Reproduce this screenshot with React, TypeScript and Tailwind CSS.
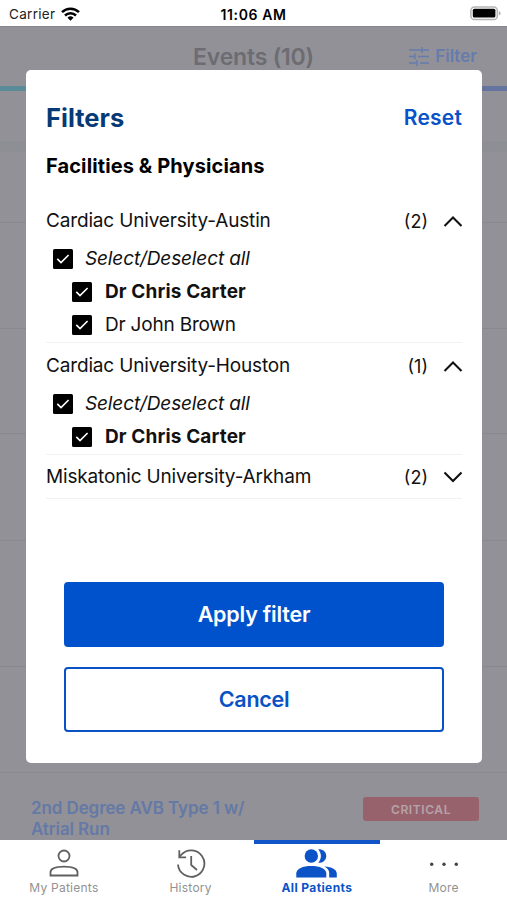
import { useState } from 'react';
import clsx from 'clsx';

interface Physician {
  name: string;
  primary?: boolean;
}

interface Facility {
  name: string;
  count: number;
  physicians: Physician[];
}

const facilities: Facility[] = [
  {
    name: 'Cardiac University-Austin',
    count: 2,
    physicians: [{ name: 'Dr Chris Carter', primary: true }, { name: 'Dr John Brown' }],
  },
  {
    name: 'Cardiac University-Houston',
    count: 1,
    physicians: [{ name: 'Dr Chris Carter', primary: true }],
  },
  { name: 'Miskatonic University-Arkham', count: 2, physicians: [] },
];

function StatusBar() {
  return (
    <div className="grid h-[26px] shrink-0 grid-cols-3 items-center bg-white pt-[2px] text-black">
      <div className="flex items-center gap-[6px] pl-[9px]">
        <span className="text-[13.5px] tracking-[0.3px] text-[#222]">Carrier</span>
        <svg width="19" height="14" viewBox="0 0 19 14" fill="none" stroke="currentColor" strokeWidth="2.5">
          <path d="M1 5.2a12.2 12.2 0 0 1 17 0" />
          <path d="M4 8.5a7.9 7.9 0 0 1 11 0" />
          <path d="M9.5 13.8 6.5 10.8a4.3 4.3 0 0 1 6 0z" fill="currentColor" stroke="none" />
        </svg>
      </div>
      <span className="text-center text-[14px] font-semibold tracking-[0.6px]">11:06 AM</span>
      <div className="flex items-center justify-end pr-[6px] pb-[2px]">
        <svg width="31" height="15" viewBox="0 0 31 15">
          <rect x="0.9" y="0.9" width="26.4" height="12.6" rx="3.6" fill="#fff" stroke="#b4b4b4" strokeWidth="1.5" />
          <rect x="2.8" y="2.8" width="22.6" height="8.8" rx="1.5" fill="#000" />
          <path d="M28.8 5v4.4c1.4-.6 1.9-1.2 1.9-2.2s-.5-1.6-1.9-2.2z" fill="#b4b4b4" />
        </svg>
      </div>
    </div>
  );
}

function Checkbox() {
  return (
    <svg className="shrink-0" width="20" height="20" viewBox="0 0 20 20">
      <rect width="20" height="20" rx="1.5" fill="#000" />
      <path d="M4.3 9.9 8 13.6l7.6-7.6" fill="none" stroke="#fff" strokeWidth="1.6" />
    </svg>
  );
}

function FacilitySection({ facility }: { facility: Facility }) {
  const [open, setOpen] = useState(facility.physicians.length > 0);

  return (
    <div className="border-b border-[#f1f1f3]">
      <button
        className={clsx('flex w-full items-center text-left text-[19px]', open ? 'h-[45px]' : 'h-[43px]')}
        onClick={() => setOpen(!open)}
      >
        <span className="flex-1 pt-[2px] tracking-[-0.16px]">{facility.name}</span>
        <span className="w-[35px] pt-[1px] text-right text-[18px]">({facility.count})</span>
        <svg className="-mr-px ml-[15px]" width="20" height="20" viewBox="0 0 20 20" fill="none" stroke="#111" strokeWidth="2.1">
          <path d={open ? 'M1.5 15 10 6.5l8.5 8.5' : 'M1.5 5.5 10 14l8.5-8.5'} />
        </svg>
      </button>
      {open && (
        <div className="pb-[1px]">
          <div className="flex h-[32px] items-center gap-[12px] pl-[7px]">
            <Checkbox />
            <span className="text-[19px] italic tracking-[-0.12px]">Select/Deselect all</span>
          </div>
          {facility.physicians.map((physician) => (
            <div key={physician.name} className="flex h-[33px] items-center gap-[13px] pl-[26px]">
              <Checkbox />
              <span className={clsx('pt-px text-[19px]', physician.primary ? 'font-bold tracking-[0.13px]' : 'tracking-[-0.2px]')}>
                {physician.name}
              </span>
            </div>
          ))}
        </div>
      )}
    </div>
  );
}

function FilterDialog() {
  return (
    <div className="absolute top-[70px] left-[26px] flex h-[693px] w-[456px] flex-col rounded-[5px] bg-white px-5 text-[#111]">
      <div className="flex h-[96px] items-center justify-between">
        <h2 className="text-[25.5px] font-bold tracking-[0.02px] text-[#063a76]">Filters</h2>
        <button className="text-[21px] font-semibold tracking-[0.2px] text-[#0852c9]">Reset</button>
      </div>
      <h3 className="-mt-[13px] text-[20px] leading-[26px] font-bold tracking-[0.11px] text-black">
        Facilities &amp; Physicians
      </h3>
      <div className="mt-[19px]">
        {facilities.map((facility) => (
          <FacilitySection key={facility.name} facility={facility} />
        ))}
      </div>
      <div className="mt-auto flex flex-col gap-5 px-[18px] pb-[31.5px]">
        <button className="h-[65px] rounded-[4px] bg-[#0052cc] text-[21.5px] font-semibold tracking-[-0.2px] text-white">
          Apply filter
        </button>
        <button className="h-[65px] rounded-[4px] border-2 border-[#0852c4] text-[21.5px] font-semibold tracking-[-0.3px] text-[#0852c4]">
          Cancel
        </button>
      </div>
    </div>
  );
}

function EventsBackdrop() {
  return (
    <div className="flex flex-1 flex-col overflow-hidden bg-[#929197]">
      <div className="grid h-[60px] shrink-0 grid-cols-[1fr_auto_1fr] items-center border-t border-[#87868c] text-[#6c6c72]">
        <span />
        <h1 className="pt-px text-[23px] font-semibold tracking-[-0.2px]">Events (10)</h1>
        <div className="flex items-center justify-end gap-[6px] pr-[30px] text-[#657cad]">
          <svg width="20" height="19" viewBox="0 0 20 19" fill="none" stroke="currentColor" strokeWidth="1.4">
            <path d="M0 3h13M13 0v6M13 3h7M0 9.5h6M6 6.5v6M9 9.5h11M0 16h8M8 13v6M11 16h9" />
          </svg>
          <span className="text-[17px] font-semibold">Filter</span>
        </div>
      </div>
      <div className="grid h-[5px] shrink-0 grid-cols-2">
        <div className="bg-[#5a8b98]" />
        <div className="bg-[#64749f]" />
      </div>
      <div className="h-[50px] shrink-0" />
      <div className="h-[11px] shrink-0 bg-[#8e8f95]" />
      <div className="h-[71px] shrink-0 border-b border-[#88888e]" />
      <div className="h-[106px] shrink-0 border-b border-[#88888e]" />
      <div className="h-[105px] shrink-0 border-b border-[#88888e]" />
      <div className="h-[107px] shrink-0 border-b border-[#88888e]" />
      <div className="h-[126px] shrink-0 border-b border-[#88888e]" />
      <div className="h-[106px] shrink-0 border-b border-[#88888e]" />
      <div className="flex items-start justify-between pt-[24px] pr-[28px] pl-[31px]">
        <p className="w-[250px] pt-px text-[17px] leading-[21px] font-semibold tracking-[-0.1px] text-[#6479a6]">
          2nd Degree AVB Type 1 w/ Atrial Run
        </p>
        <span className="flex h-[24px] w-[116px] items-center justify-center rounded-[3px] bg-[#98626c] pt-px text-[12px] font-semibold tracking-[0.6px] text-[#b5a3aa]">
          CRITICAL
        </span>
      </div>
    </div>
  );
}

function TabBar() {
  return (
    <nav className="grid h-[60px] shrink-0 grid-cols-4 bg-white text-[12px] text-[#929292]">
      <div className="flex flex-col items-center pt-[9px] pl-px">
        <svg width="30" height="29" viewBox="0 0 30 29" fill="none" stroke="#606060" strokeWidth="1.8">
          <circle cx="15" cy="7" r="5.5" />
          <path d="M1.5 26.5v-3.2C1.5 19.5 7.5 17.7 15 17.7s13.5 1.8 13.5 5.6v3.2z" />
        </svg>
        <span className="mt-[2px] leading-[16px] tracking-[0.25px]">My Patients</span>
      </div>
      <div className="flex flex-col items-center pt-[9px] pl-px">
        <svg width="30" height="29" viewBox="0 0 30 29" fill="none" stroke="#606060" strokeWidth="1.8">
          <path d="M2 15.5a13.2 13.2 0 1 0 3.2-9.6L3.2 8" />
          <path d="M3.3 1.3v7h6.8M15.2 7v9l5.8 5" />
        </svg>
        <span className="mt-[2px] leading-[16px] tracking-[0.25px]">History</span>
      </div>
      <div className="flex flex-col items-center border-t-4 border-[#1054c7] pt-[5px] font-bold text-[#0b53c7]">
        <svg width="41" height="29" viewBox="0 0 41 29" fill="currentColor">
          <circle cx="15.3" cy="7" r="6.7" />
          <path d="M22.2.5a6.7 6.7 0 1 1 0 13.1c3.6-3.4 3.6-9.7 0-13.1z" />
          <path d="M.3 28.5v-4.3c0-4.7 6.7-7.3 15-7.3s15 2.6 15 7.3v4.3z" />
          <path d="M28.4 17.6c7.4.3 12.4 3 12.4 7.2v3.7h-7.6v-4.3c0-2.8-1.9-5.1-4.8-6.6z" />
        </svg>
        <span className="mt-[2px] leading-[16px] tracking-[0.4px]">All Patients</span>
      </div>
      <div className="flex flex-col items-center pt-[9px]">
        <svg width="30" height="29" viewBox="0 0 30 29" fill="#444">
          <circle cx="2.7" cy="15.3" r="1.7" />
          <circle cx="15" cy="15.3" r="1.7" />
          <circle cx="27.3" cy="15.3" r="1.7" />
        </svg>
        <span className="mt-[2px] leading-[16px] tracking-[0.2px]">More</span>
      </div>
    </nav>
  );
}

export default function App() {
  return (
    <div className="relative flex h-[900px] w-[507px] flex-col overflow-hidden bg-white font-[Inter,'Liberation_Sans',sans-serif]">
      <StatusBar />
      <EventsBackdrop />
      <TabBar />
      <FilterDialog />
    </div>
  );
}
